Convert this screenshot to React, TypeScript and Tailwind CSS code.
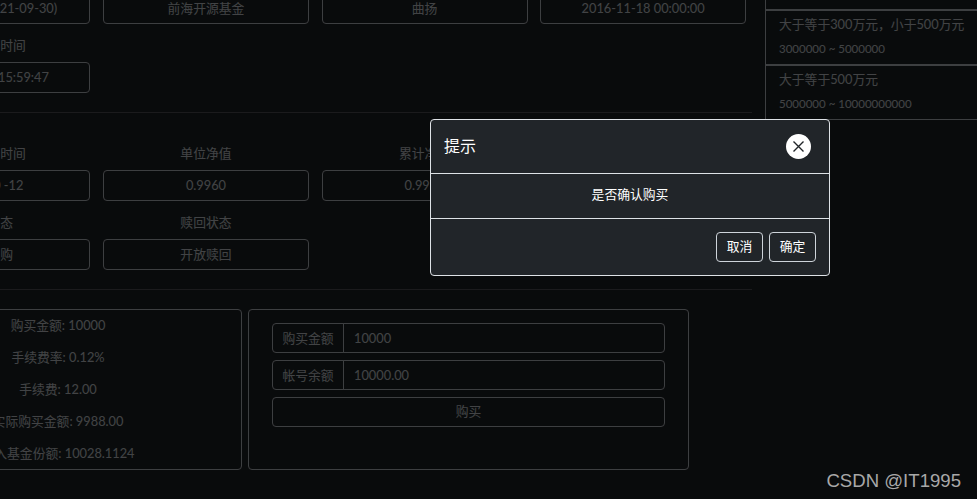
import React from 'react'

const font = "font-['Lato','Noto_Sans_CJK_SC',sans-serif]"

function Field({ label, value }: { label?: string; value: string }) {
  return (
    <div className="mb-[13px] pl-[6.5px] pr-[6px]">
      {label && <div className="h-[19px] mb-[6px] leading-[16px] text-center">{label}</div>}
      <div className="h-[31px] border border-[#ced4da] rounded-[4px] flex items-center justify-center whitespace-nowrap">{value}</div>
    </div>
  )
}

function Divider() {
  return <div className="h-px bg-[#dee2e6]/30 mt-[6px]" />
}

function PriceItem({ title, range }: { title: string; range: string }) {
  return (
    <div className="h-[55px] border border-[#ced4da] pl-[13px] pt-[3px]">
      <div className="h-[20px] leading-[20px] text-[12.8px]">{title}</div>
      <div className="h-[20px] mt-[5px] leading-[20px] text-[11.5px]">{range}</div>
    </div>
  )
}

function InputGroup({ label, value }: { label: string; value: string }) {
  return (
    <div className="flex h-[30px]">
      <div className="w-[72px] border border-[#ced4da] rounded-l-[4px] flex items-center justify-center pt-px">{label}</div>
      <div className="flex-1 -ml-px border border-[#ced4da] rounded-r-[4px] flex items-center pl-[10px] pt-px">{value}</div>
    </div>
  )
}

const summary = ['购买金额: 10000', '手续费率: 0.12%', '手续费: 12.00', '实际购买金额: 9988.00', '买入基金份额: 10028.1124']

export default function App() {
  return (
    <div className={`relative w-[977px] h-[499px] overflow-hidden bg-[#212529] text-[#dee2e6] text-[12.8px] ${font}`}>
      <div className="flex -ml-[122.2px] w-[1150px]">
        <main className="w-[874.4px] shrink-0 -mt-[7px]">
          <div className="grid grid-cols-4">
            <Field value="混合型基金(2021-09-30)" />
            <Field value="前海开源基金" />
            <Field value="曲扬" />
            <Field value="2016-11-18 00:00:00" />
            <Field label="基金更新时间" value="2021-10-13 15:59:47" />
          </div>
          <Divider />
          <div className="grid grid-cols-4 mt-[32px]">
            <Field label="净值更新时间" value="2021-10 -12" />
            <Field label="单位净值" value="0.9960" />
            <Field label="累计净值" value="0.9960" />
            <div />
            <Field label="申购状态" value="开放申购" />
            <Field label="赎回状态" value="开放赎回" />
          </div>
          <Divider />
          <div className="flex gap-[6px] mt-[19px] -ml-[3.8px]">
            <div className="w-[368px] h-[161px] border border-[#ced4da] rounded-[4px]">
              {summary.map((line) => (
                <div key={line} className="h-[32px] flex items-center justify-center">{line}</div>
              ))}
            </div>
            <div className="w-[441px] h-[161px] border border-[#ced4da] rounded-[4px] px-[23px] pt-[13px] flex flex-col gap-[7px]">
              <InputGroup label="购买金额" value="10000" />
              <InputGroup label="帐号余额" value="10000.00" />
              <div className="h-[30px] border border-[#ced4da] rounded-[4px] flex items-center justify-center">购买</div>
            </div>
          </div>
        </main>
        <aside className="w-[240px] shrink-0 ml-[12.8px] -mt-[45px]">
          <PriceItem title="大于等于100万元，小于300万元" range="1000000 ~ 3000000" />
          <PriceItem title="大于等于300万元，小于500万元" range="3000000 ~ 5000000" />
          <PriceItem title="大于等于500万元" range="5000000 ~ 10000000000" />
        </aside>
      </div>

      {/* backdrop + dialog */}
      <div className="absolute inset-0 bg-black/70" />
      <div className="absolute left-[430px] top-[119px] w-[400px] h-[157px] bg-[#212529] border border-[#dee2e6] rounded-[4px] text-white flex flex-col">
        <div className="h-[54px] shrink-0 border-b border-[#dee2e6] flex items-center justify-between pl-[13px] pr-[18px]">
          <span className="text-[16px] leading-[22px] -mt-[2px]">提示</span>
          <span className="w-[25px] h-[25px] rounded-full bg-white flex items-center justify-center -mt-px">
            <svg width="13" height="13" viewBox="0 0 13 13" fill="none" stroke="#212529" strokeWidth="1.4">
              <path d="M1.5 1.5l10 10M11.5 1.5l-10 10" />
            </svg>
          </span>
        </div>
        <div className="h-[45px] shrink-0 border-b border-[#dee2e6] flex items-center justify-center pb-[2px]">是否确认购买</div>
        <div className="flex-1 flex items-center justify-end gap-[6px] pr-[13px]">
          <button className="w-[47px] h-[30px] border border-[#ced4da] rounded-[4px]">取消</button>
          <button className="w-[47px] h-[30px] border border-[#ced4da] rounded-[4px]">确定</button>
        </div>
      </div>

      <div className="absolute right-[16px] bottom-[5px] text-[18.6px] leading-[26px] text-[#a8a8a8] font-['Liberation_Sans',sans-serif]">CSDN @IT1995</div>
    </div>
  )
}
